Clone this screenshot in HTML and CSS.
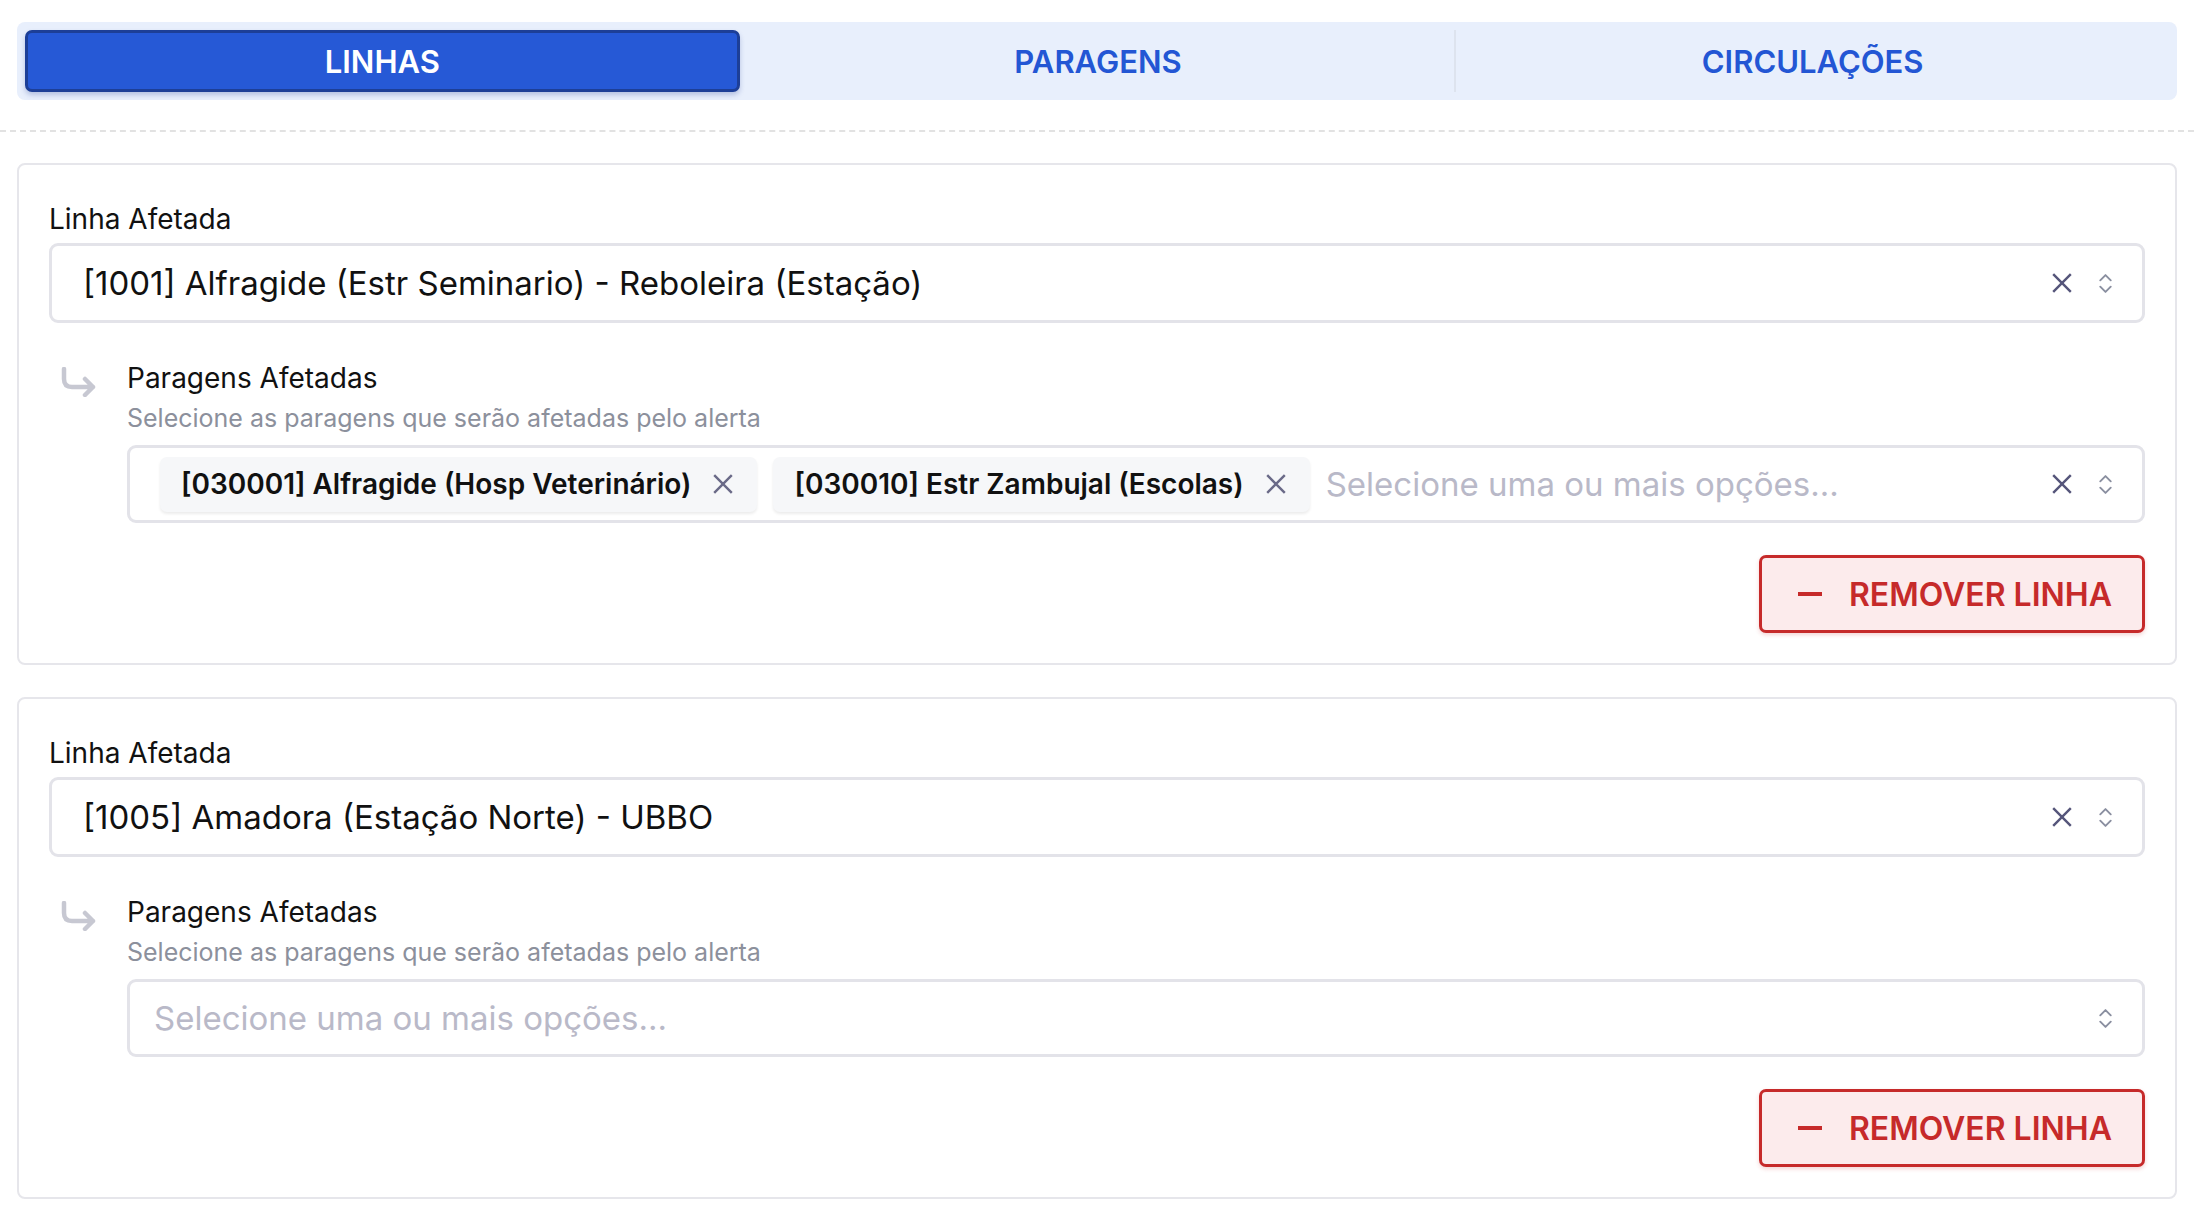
FILE: index.html
```html
<!DOCTYPE html>
<html lang="pt">
<head>
  <meta charset="utf-8" />
  <title>Alerta - Linhas afetadas</title>
  <meta name="viewport" content="width=device-width, initial-scale=1">
  <link rel="stylesheet" href="styles.css">
</head>
<body>

<div class="tabs">
  <div class="tab active">Linhas</div>
  <div class="tab">Paragens</div>
  <div class="tab">Circulações</div>
</div>

<hr class="divider">

<div class="card">
  <div class="field-label">Linha Afetada</div>
  <div class="select">
    <span class="select-value">[1001] Alfragide (Estr Seminario) - Reboleira (Estação)</span>
    <span class="select-icons">
      <svg class="icon-clear" viewBox="0 0 20 20"><path d="M2 2 L18 18 M18 2 L2 18"/></svg>
      <svg class="icon-chevrons" viewBox="0 0 14 20"><path d="M2 7 L7 2 L12 7 M2 13 L7 18 L12 13"/></svg>
    </span>
  </div>

  <div class="stops">
    <div class="stops-arrow">
      <svg viewBox="0 0 38 30"><path d="M4 2 V12 Q4 20 12 20 H33 M25 12 L33 20 L25 28"/></svg>
    </div>
    <div class="stops-body">
      <div class="field-label">Paragens Afetadas</div>
      <div class="field-help">Selecione as paragens que serão afetadas pelo alerta</div>
      <div class="select multi">
        <span class="chips">
          <span class="chip">[030001] Alfragide (Hosp Veterinário)
            <svg class="icon-clear" viewBox="0 0 20 20"><path d="M2 2 L18 18 M18 2 L2 18"/></svg>
          </span>
          <span class="chip">[030010] Estr Zambujal (Escolas)
            <svg class="icon-clear" viewBox="0 0 20 20"><path d="M2 2 L18 18 M18 2 L2 18"/></svg>
          </span>
          <span class="placeholder">Selecione uma ou mais opções...</span>
        </span>
        <span class="select-icons">
          <svg class="icon-clear" viewBox="0 0 20 20"><path d="M2 2 L18 18 M18 2 L2 18"/></svg>
          <svg class="icon-chevrons" viewBox="0 0 14 20"><path d="M2 7 L7 2 L12 7 M2 13 L7 18 L12 13"/></svg>
        </span>
      </div>
    </div>
  </div>

  <div class="card-actions">
    <button class="btn-remove">
      <svg viewBox="0 0 24 4"><path d="M0 2 H24"/></svg>
      Remover linha
    </button>
  </div>
</div>

<div class="card">
  <div class="field-label">Linha Afetada</div>
  <div class="select">
    <span class="select-value">[1005] Amadora (Estação Norte) - UBBO</span>
    <span class="select-icons">
      <svg class="icon-clear" viewBox="0 0 20 20"><path d="M2 2 L18 18 M18 2 L2 18"/></svg>
      <svg class="icon-chevrons" viewBox="0 0 14 20"><path d="M2 7 L7 2 L12 7 M2 13 L7 18 L12 13"/></svg>
    </span>
  </div>

  <div class="stops">
    <div class="stops-arrow">
      <svg viewBox="0 0 38 30"><path d="M4 2 V12 Q4 20 12 20 H33 M25 12 L33 20 L25 28"/></svg>
    </div>
    <div class="stops-body">
      <div class="field-label">Paragens Afetadas</div>
      <div class="field-help">Selecione as paragens que serão afetadas pelo alerta</div>
      <div class="select multi">
        <span class="chips">
          <span class="placeholder">Selecione uma ou mais opções...</span>
        </span>
        <span class="select-icons">
          <svg class="icon-chevrons" viewBox="0 0 14 20"><path d="M2 7 L7 2 L12 7 M2 13 L7 18 L12 13"/></svg>
        </span>
      </div>
    </div>
  </div>

  <div class="card-actions">
    <button class="btn-remove">
      <svg viewBox="0 0 24 4"><path d="M0 2 H24"/></svg>
      Remover linha
    </button>
  </div>
</div>

</body>
</html>
```

FILE: styles.css
```css
body, html {
  margin:0;
  background:#fff;
  font-family:Inter, Roboto, "Liberation Sans", sans-serif;
  color:#111;
}
body {
  padding:22px 17px 24px;
}

/* tab bar */
.tabs {
  display:grid;
  grid-template-columns:1fr 1fr 1fr;
  background:#e8effc;
  border-radius:8px;
  padding:8px;
}
.tab {
  height:62px;
  display:flex;
  align-items:center;
  justify-content:center;
  box-sizing:border-box;
  font-size:31px;
  font-weight:600;
  text-transform:uppercase;
  color:#2356d4;
  border-left:2px solid #dde3ee;
}
.tab:first-child {
  border-left:none;
}
.tab.active {
  background:#2659d6;
  color:#fff;
  border:3px solid #1d3f97;
  border-radius:7px;
  box-shadow:0 3px 5px rgba(30,60,150,.25);
}
.tab.active + .tab {
  border-left-color:transparent;
}

.divider {
  border:none;
  border-top:2px dashed #e2e2e2;
  margin:30px -17px 31px;
}

/* line cards */
.card {
  border:2px solid #e6e6eb;
  border-radius:8px;
  padding:38px 30px 30px;
  margin-bottom:32px;
}
.field-label {
  font-size:28px;
  line-height:32px;
}
.field-help {
  font-size:25px;
  line-height:28px;
  color:#8c909c;
  margin-top:10px;
}

.select {
  display:flex;
  align-items:center;
  height:80px;
  box-sizing:border-box;
  border:3px solid #e3e3e9;
  border-radius:9px;
  margin-top:8px;
  padding:0 29px 0 31px;
  font-size:33px;
}
.select-value {
  flex:1;
}
.select-icons {
  display:flex;
  align-items:center;
  gap:25px;
  margin-left:auto;
}
.icon-clear {
  width:22px;
  height:22px;
  fill:none;
  stroke:#55557a;
  stroke-width:2.2;
}
.icon-chevrons {
  width:15px;
  height:21px;
  fill:none;
  stroke:#8a8fa0;
  stroke-width:1.8;
  stroke-linecap:round;
  stroke-linejoin:round;
}

.stops {
  display:flex;
  margin-top:39px;
}
.stops-arrow {
  width:78px;
  flex:none;
}
.stops-arrow svg {
  width:38px;
  height:30px;
  margin:5px 0 0 11px;
  fill:none;
  stroke:#c7c8d2;
  stroke-width:4.5;
  stroke-linecap:round;
  stroke-linejoin:round;
}
.stops-body {
  flex:1;
}
.select.multi {
  height:78px;
  margin-top:13px;
  padding-left:30px;
}
.chips {
  flex:1;
  display:flex;
  align-items:center;
  gap:16px;
}
.chip {
  display:inline-flex;
  align-items:center;
  gap:21px;
  height:55px;
  box-sizing:border-box;
  padding:0 23px 0 21px;
  background:#f6f7f9;
  border-radius:7px;
  box-shadow:0 2px 3px rgba(0,0,0,.08);
  font-size:28px;
  font-weight:600;
  color:#111;
}
.chip .icon-clear {
  stroke:#6a6a88;
}
.placeholder {
  color:#b9b9c8;
}
.select.multi .chips .placeholder:first-child {
  margin-left:-6px;
}

.card-actions {
  display:flex;
  justify-content:flex-end;
  margin-top:32px;
}
.btn-remove {
  display:flex;
  align-items:center;
  gap:27px;
  height:78px;
  box-sizing:border-box;
  padding:0 30px 0 36px;
  background:#fcebec;
  border:3px solid #c62a2a;
  border-radius:7px;
  box-shadow:0 2px 4px rgba(198,42,42,.2);
  font-family:inherit;
  font-size:32px;
  font-weight:600;
  text-transform:uppercase;
  color:#c62a2a;
}
.btn-remove svg {
  width:24px;
  height:4px;
  stroke:#c62a2a;
  stroke-width:4;
}
```
